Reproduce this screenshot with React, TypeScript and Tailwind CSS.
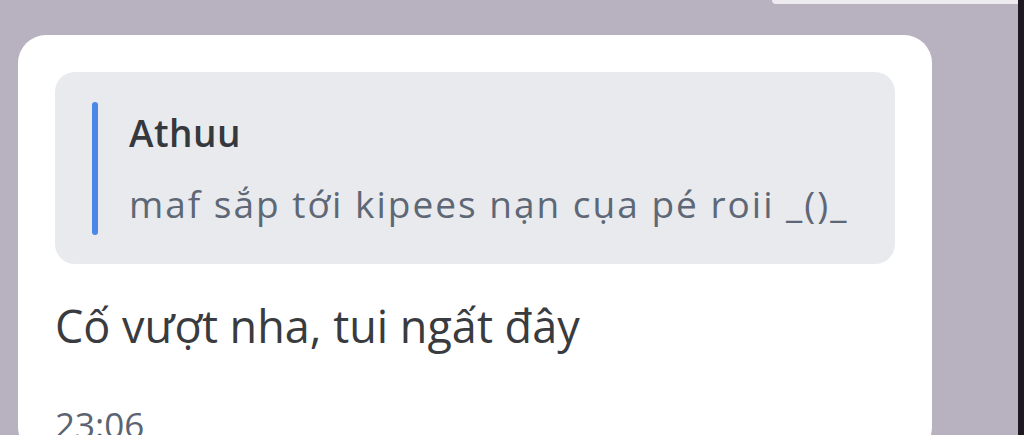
import React from "react";

const App = () => {
  return (
    <div
      className="w-[1024px] h-[435px] overflow-hidden bg-[#b8b1c0] border-r-[6px] border-[#1c1a20]"
      style={{ fontFamily: '"Open Sans", "Noto Sans", sans-serif' }}
    >
      {/* edge of the previous bubble */}
      <div className="flex justify-end">
        <div className="w-[246px] h-[4px] bg-[#eeebf0] rounded-bl-[4px]" />
      </div>

      {/* message bubble */}
      <div className="ml-[18px] mt-[31px] w-[914px] h-[420px] bg-white rounded-[28px] px-[37px] pt-[37px]">
        {/* quoted reply */}
        <div className="h-[192px] bg-[#e8eaed] rounded-[20px] flex items-center pl-[37px]">
          <div className="w-[6px] h-[133px] bg-[#4a87e6] rounded-full" />
          <div className="ml-[31px] flex flex-col">
            <span className="mt-[2px] text-[37px] leading-[50px] font-semibold text-[#35383d] tracking-[0.5px]">Athuu</span>
            <span className="mt-[20px] text-[37px] leading-[52px] text-[#5e6776] tracking-[2px]">
              maf sắp tới kipees nạn cụa pé roii _()_
            </span>
          </div>
        </div>

        <div className="mt-[31px] text-[45px] leading-[61px] text-[#3a3b3e]">
          Cố vượt nha, tui ngất đây
        </div>
        <div className="mt-[46px] text-[35px] leading-[45px] text-[#5b6472]">23:06</div>
      </div>
    </div>
  );
};

export default App;
